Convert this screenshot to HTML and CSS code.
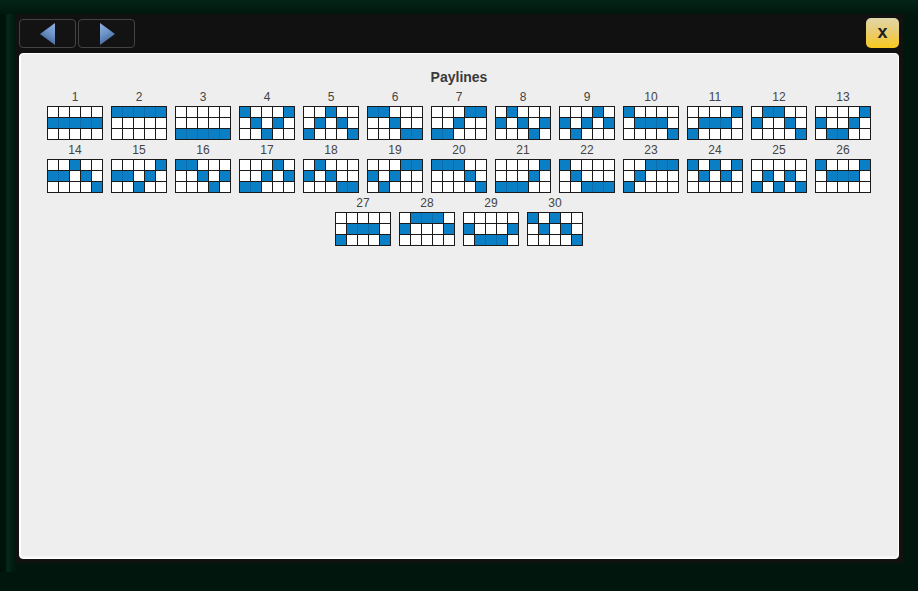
FILE: index.html
```html
<!DOCTYPE html>
<html lang="en">
<head>
  <meta charset="UTF-8">
  <meta name="viewport" content="width=device-width, initial-scale=1.0">
  <title>Paylines</title>
  <link rel="stylesheet" href="styles.css">
</head>
<body>
  <div class="frame">
    <div class="toolbar">
      <button class="nav-btn" type="button" aria-label="Previous">
        <svg width="16" height="24" viewBox="0 0 16 24"><defs><linearGradient id="arrowLeft" x1="0.9" y1="0" x2="0.5" y2="1"><stop offset="0" stop-color="#8fb0dc"/><stop offset="0.5" stop-color="#6d93c6"/><stop offset="1" stop-color="#3b5f93"/></linearGradient></defs><path d="M0 12 15 1V23Z" fill="url(#arrowLeft)"/></svg>
      </button>
      <button class="nav-btn" type="button" aria-label="Next">
        <svg width="16" height="24" viewBox="0 0 16 24"><defs><linearGradient id="arrowRight" x1="0.1" y1="0" x2="0.5" y2="1"><stop offset="0" stop-color="#8fb0dc"/><stop offset="0.5" stop-color="#6d93c6"/><stop offset="1" stop-color="#3b5f93"/></linearGradient></defs><path d="M16 12 1 1V23Z" fill="url(#arrowRight)"/></svg>
      </button>
      <button class="close-btn" type="button">x</button>
    </div>
    <div class="panel">
      <h1 class="title">Paylines</h1>
      <div class="lines" id="lines"></div>
    </div>
  </div>
  <script src="script.js"></script>
</body>
</html>
```

FILE: styles.css
```css
html, body {
  margin: 0;
  height: 100%;
}
body {
  height: 591px;
  box-sizing: border-box;
  padding: 14px 15px 28px 16px;
  overflow: hidden;
  font-family: "Liberation Sans", Arial, sans-serif;
  background-color: #01170e;
  background-image:
    linear-gradient(to bottom, #032417 0, #01170e 14px, transparent 14px),
    linear-gradient(to right, #00130b 5px, #062c1a 8px, #031f12 11px, #01170e 16px);
  background-size: 100% 100%, 100% 572px;
  background-repeat: no-repeat;
}
.frame {
  height: 100%;
  box-sizing: border-box;
  padding: 4px 4px 4px 3px;
  display: flex;
  flex-direction: column;
  background-color: #111;
}

/* Toolbar */
.toolbar {
  height: 35px;
  display: flex;
  align-items: flex-start;
  gap: 2px;
}
.nav-btn {
  width: 57px;
  height: 29px;
  margin-top: 1px;
  padding: 0;
  display: flex;
  align-items: center;
  justify-content: center;
  background-color: #131313;
  border: 1px solid #444;
  border-radius: 4px;
}
.close-btn {
  width: 33px;
  height: 30px;
  margin-left: auto;
  padding: 0 0 2px;
  color: #222;
  font-family: inherit;
  font-size: 18px;
  font-weight: bold;
  line-height: 1;
  background: linear-gradient(to bottom, #e2d6a8 0%, #e8cd73 45%, #f9c91d 100%);
  border: none;
  border-radius: 5px;
}

/* Paylines panel */
.panel {
  flex: 1;
  box-sizing: border-box;
  padding-top: 16px;
  background-color: #eee;
  border: 1px solid #fff;
  border-radius: 4px;
  box-shadow: inset 1px 0 0 #fff, inset 0 -2px 0 #f6f6f6;
}
.title {
  margin: 0 0 6px;
  color: #3a3a3a;
  font-size: 14px;
  font-weight: bold;
  line-height: 14px;
  text-align: center;
}
.lines {
  display: flex;
  flex-wrap: wrap;
  justify-content: center;
}
.line {
  width: 64px;
  height: 53px;
  display: flex;
  flex-direction: column;
  align-items: center;
  color: #444;
  font-size: 12px;
  line-height: 14px;
}
.line-grid {
  display: grid;
  grid-template-columns: repeat(5, 10px);
  grid-template-rows: repeat(3, 10px);
  gap: 1px;
  padding: 1px;
  margin-top: 2px;
  background-color: #1a1a1a;
}
.cell {
  background-color: #fff;
}
.cell.on {
  background-color: #0a7fc6;
}
.cell.join {
  box-shadow: 1px 0 0 #0b6dab;
}
```

FILE: script.js
```js
// row of the marked cell in each of the 5 columns, 0 = top
const paylines = [
  "11111", "00000", "22222", "01210", "21012", "00122", "22100", "10121", "12101", "01112",
  "21110", "10012", "12210", "11012", "11210", "00121", "22101", "10122", "12100", "00012",
  "22210", "01222", "21000", "01010", "21212", "01110", "21112", "10001", "12221", "01012"
];

const lines = document.getElementById("lines");

paylines.forEach(function (rows, index) {
  let cells = "";
  for (let r = 0; r < 3; r++) {
    for (let c = 0; c < 5; c++) {
      let cls = "cell";
      if (Number(rows[c]) === r) {
        cls += " on";
        if (rows[c + 1] === rows[c]) cls += " join";
      }
      cells += `<div class="${cls}"></div>`;
    }
  }
  lines.innerHTML += `<div class="line"><span>${index + 1}</span><div class="line-grid">${cells}</div></div>`;
});
```
